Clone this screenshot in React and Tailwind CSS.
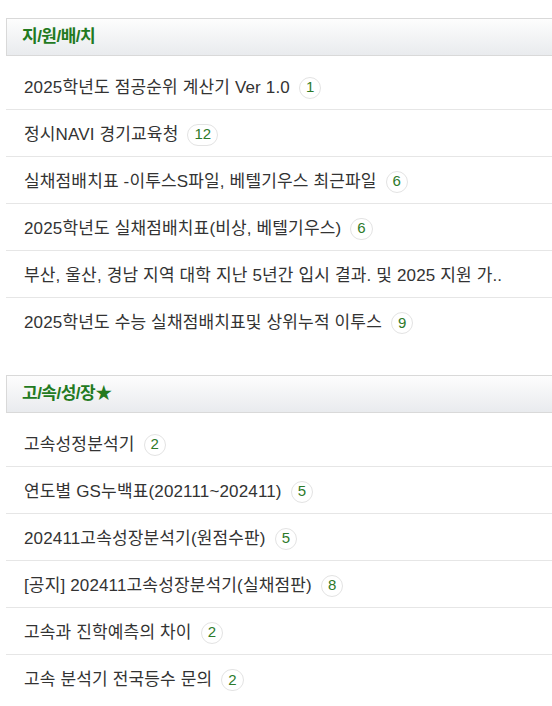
const sections = [
  {
    title: "지/원/배/치",
    items: [
      { text: "2025학년도 점공순위 계산기 Ver 1.0", count: 1 },
      { text: "정시NAVI 경기교육청", count: 12 },
      { text: "실채점배치표 -이투스S파일, 베텔기우스 최근파일", count: 6 },
      { text: "2025학년도 실채점배치표(비상, 베텔기우스)", count: 6 },
      { text: "부산, 울산, 경남 지역 대학 지난 5년간 입시 결과. 및 2025 지원 가..", count: null },
      { text: "2025학년도 수능 실채점배치표및 상위누적 이투스", count: 9 },
    ],
  },
  {
    title: "고/속/성/장★",
    items: [
      { text: "고속성정분석기", count: 2 },
      { text: "연도별 GS누백표(202111~202411)", count: 5 },
      { text: "202411고속성장분석기(원점수판)", count: 5 },
      { text: "[공지] 202411고속성장분석기(실채점판)", count: 8 },
      { text: "고속과 진학예측의 차이", count: 2 },
      { text: "고속 분석기 전국등수 문의", count: 2 },
    ],
  },
];

function Section({ title, items }) {
  return (
    <div className="pl-[6px]">
      <div className="h-[38px] border border-r-0 border-[#d9d9d9] bg-gradient-to-b from-[#fdfdfd] to-[#e9ebee] flex items-center pl-[15px]">
        <h2 className="text-[17px] font-bold text-[#237a1f] tracking-[-0.5px]">{title}</h2>
      </div>
      <ul className="mt-[7px]">
        {items.map((item, i) => (
          <li
            key={i}
            className={
              "h-[47px] flex items-center pl-[18px] pt-[3px] text-[17px] text-[#333] " +
              (i < items.length - 1 ? "border-b border-[#e6e6e6]" : "")
            }
          >
            <span className="whitespace-nowrap tracking-[0.15px]">{item.text}</span>
            {item.count !== null && (
              <span className="ml-[9px] min-w-[22px] h-[22px] px-[6px] rounded-full border border-[#e3e3e3] flex items-center justify-center text-[15px] text-[#2d7a2a]">
                {item.count}
              </span>
            )}
          </li>
        ))}
      </ul>
    </div>
  );
}

export default function App() {
  return (
    <div
      className="bg-white min-h-screen pt-[18px] overflow-hidden"
      style={{ fontFamily: '"Liberation Sans", "Noto Sans CJK KR", sans-serif' }}
    >
      <Section {...sections[0]} />
      <div className="h-[30px]" />
      <Section {...sections[1]} />
    </div>
  );
}
